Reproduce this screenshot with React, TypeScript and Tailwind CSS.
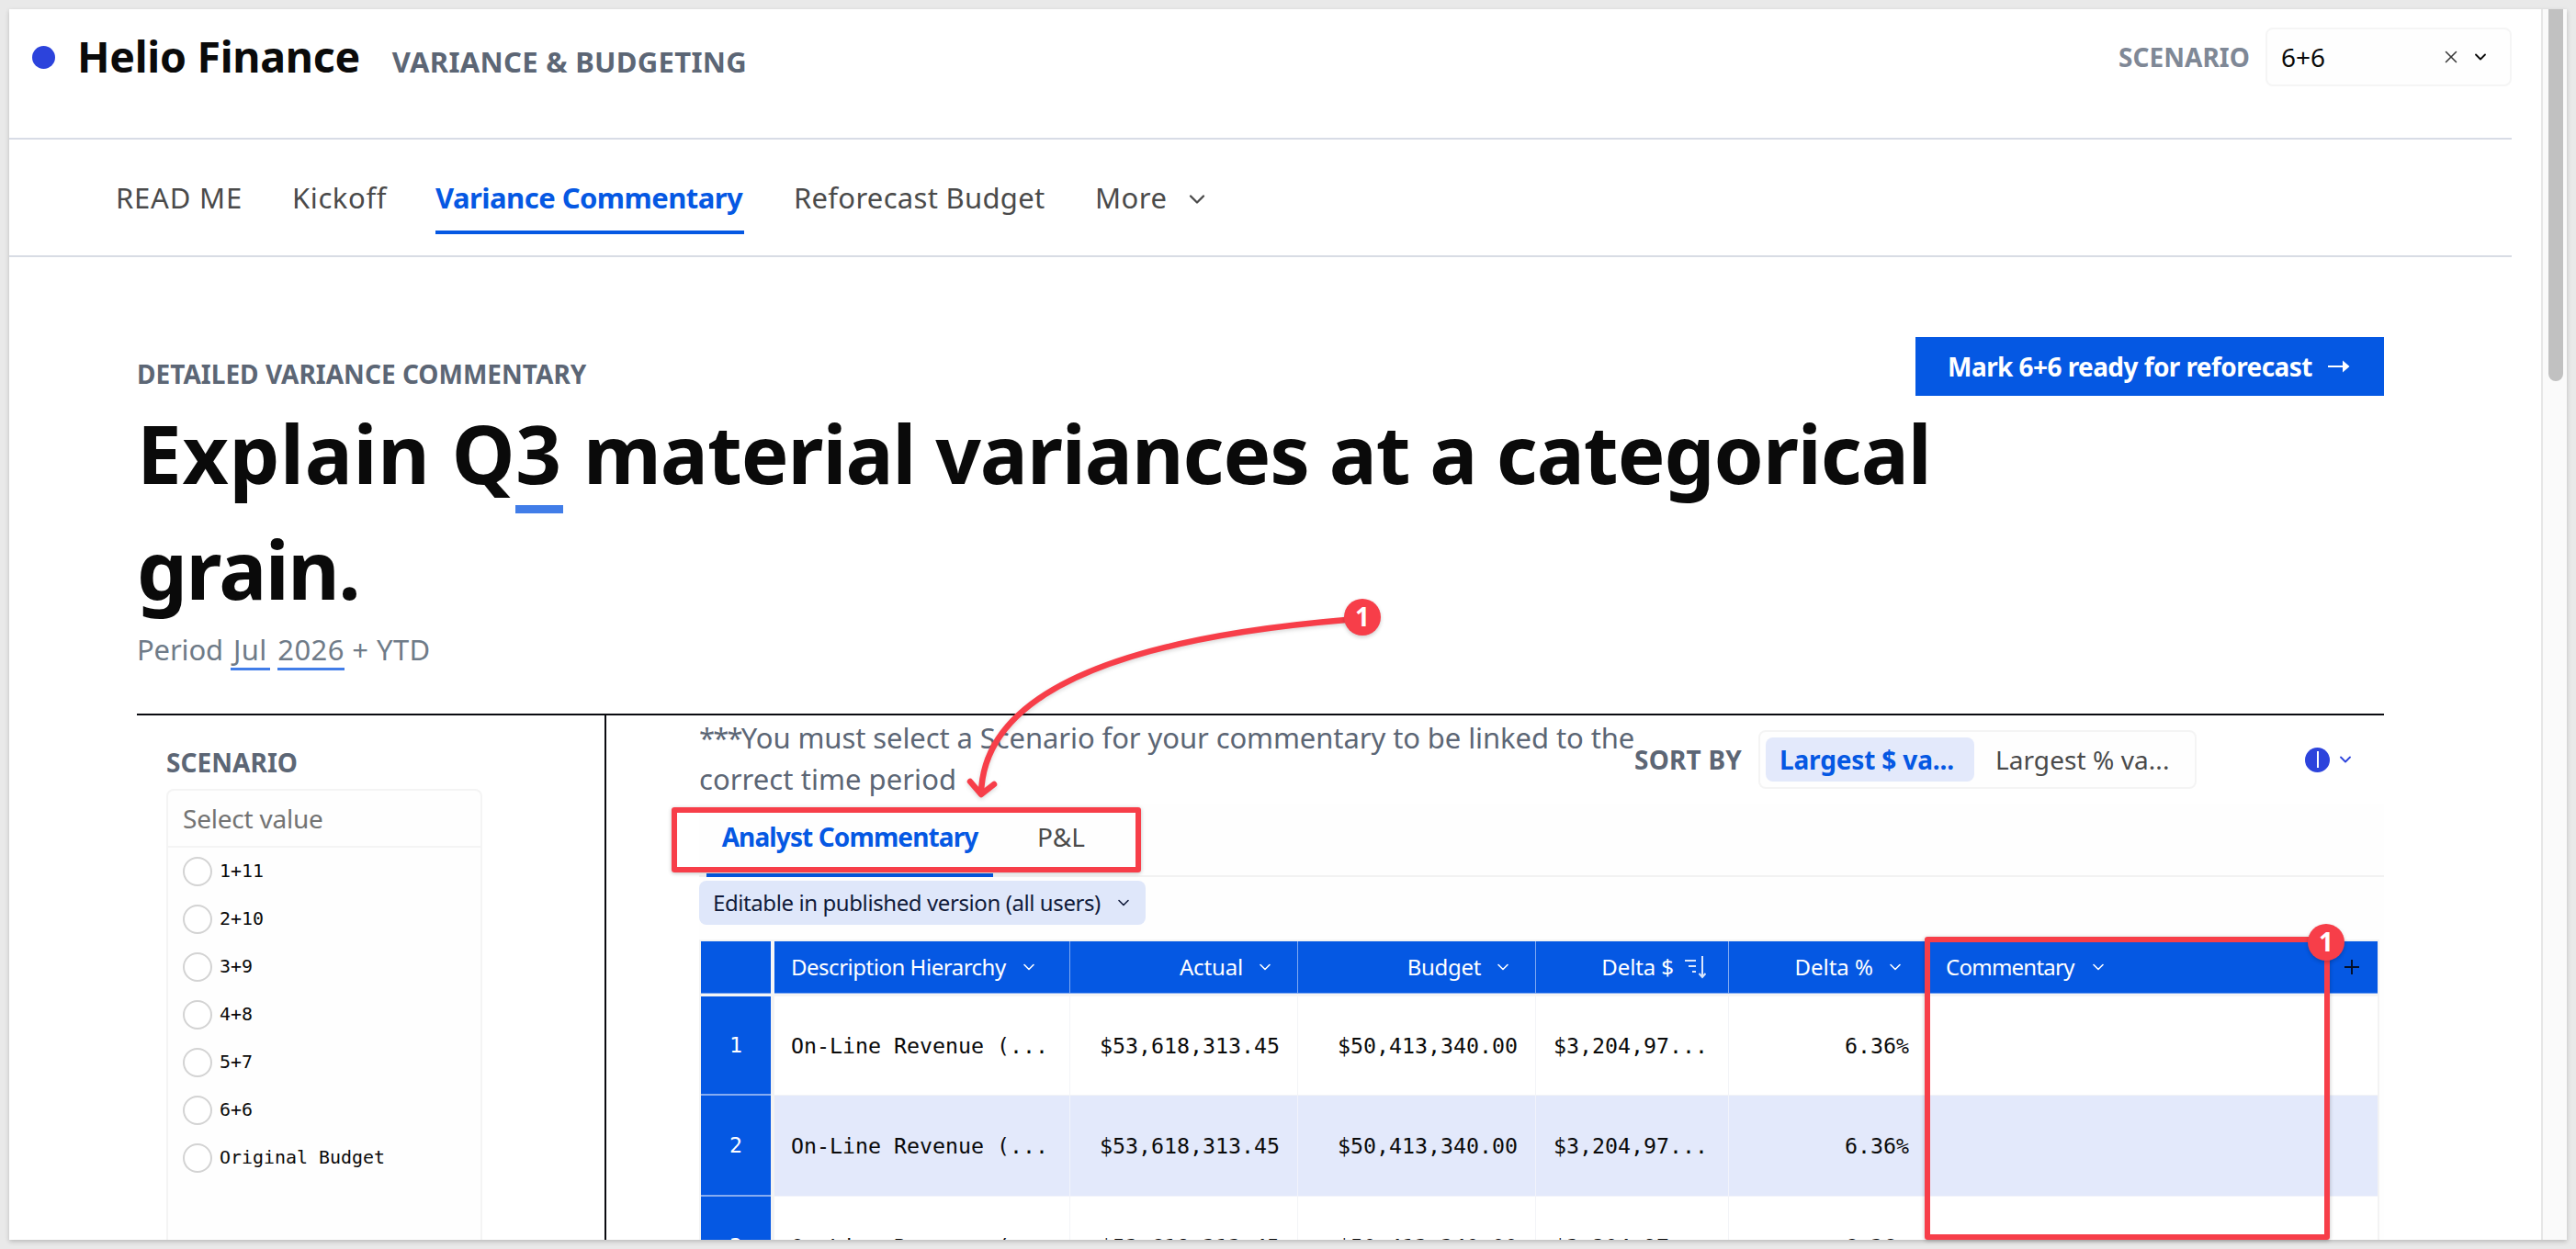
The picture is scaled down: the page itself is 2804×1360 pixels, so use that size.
import React from "react";
import { ChevronDown, X } from "lucide-react";

const scenarios = ["1+11", "2+10", "3+9", "4+8", "5+7", "6+6", "Original Budget"];

interface ROW_TYPE {
  id: number;
  description: string;
  actual: string;
  budget: string;
  delta: string;
  percent: string;
}

const tableRows: ROW_TYPE[] = [1, 2, 3].map((id) => ({
  id,
  description: "On-Line Revenue (...",
  actual: "$53,618,313.45",
  budget: "$50,413,340.00",
  delta: "$3,204,97...",
  percent: "6.36%",
}));

const columns =
  "grid grid-cols-[76px_4px_322px_248px_259px_210px_217px_435px_54px]";

const App = () => {
  return (
    <div className="relative w-[2804px] h-[1360px] overflow-hidden bg-[#e9e9e9] p-[10px] font-['Noto_Sans',sans-serif] text-[#0a0a0a]">
      <div className="flex w-[2784px] h-[1340px] overflow-hidden bg-white shadow-[0_2px_5px_rgba(0,0,0,0.2)]">
        <div className="w-[2756px] h-full overflow-hidden">
          <Header />
          <NavBar />
          <main className="ml-[139px] w-[2446px]">
            <TitleSection />
            <div className="flex h-[573px] border-t-2 border-[#0a0b10]">
              <ScenarioFilter />
              <div className="flex-1 pl-[101px]">
                <SortBar />
                <CommentaryPanel />
              </div>
            </div>
          </main>
        </div>
        {/* scrollbar */}
        <div className="w-[28px] h-full border-l-2 border-[#e6e6e6] bg-[#fafafa] pl-[6px]">
          <div className="w-[16px] h-[405px] rounded-b-full bg-[#c1c1c1]" />
        </div>
      </div>
      <Callouts />
    </div>
  );
};

export default App;

const Header = () => {
  return (
    <header className="w-[2724px] h-[142px] border-b-2 border-[#d8dce6]">
      <div className="flex items-center h-[104px] pl-[25px]">
        <div className="w-[25px] h-[25px] rounded-full bg-[#2c43dc]" />
        <div className="flex items-baseline mb-[1px] ml-[24px] leading-none">
          <h1 className="text-[46.5px] font-bold tracking-[-0.3px]">
            Helio Finance
          </h1>
          <span className="ml-[35px] text-[31px] font-bold tracking-[0.3px] text-[#5c6675]">
            VARIANCE &amp; BUDGETING
          </span>
        </div>
        <span className="ml-auto mr-[17px] text-[28px] leading-none font-bold tracking-[0.05px] text-[#7f8896]">
          SCENARIO
        </span>
        <div className="flex items-center w-[268px] h-[64px] pl-[15px] pr-[22px] rounded-lg border-2 border-[#f5f5f5] bg-[#fefefe]">
          <span className="text-[28px] leading-none">6+6</span>
          <X size={22} strokeWidth={1.7} className="ml-auto text-[#3a3a3a]" />
          <ChevronDown size={20} strokeWidth={2.2} className="ml-[11px]" />
        </div>
      </div>
    </header>
  );
};

const NavBar = () => {
  return (
    <nav className="flex w-[2724px] h-[128px] pt-[27px] pl-[116px] border-b-2 border-[#d8dce4] text-[31px] leading-none text-[#4a4a4a] whitespace-nowrap">
      <div className="flex items-center w-[192px] h-[72px] tracking-[0.8px]">
        READ ME
      </div>
      <div className="flex items-center w-[156px] h-[72px] tracking-[0.6px]">
        Kickoff
      </div>
      <div className="flex items-center w-[336px] h-[76px] border-b-4 border-[#0558e3] font-bold tracking-[-0.54px] text-[#0558e3]">
        Variance Commentary
      </div>
      <div className="flex items-center w-[328px] h-[72px] ml-[54px] tracking-[0.3px]">
        Reforecast Budget
      </div>
      <div className="flex items-center h-[72px]">
        <span className="w-[97px] tracking-[0.48px]">More</span>
        <ChevronDown size={28} strokeWidth={2} className="mt-[3px]" />
      </div>
    </nav>
  );
};

const TitleSection = () => {
  return (
    <section className="flex h-[497px]">
      <div className="w-[1936px] shrink-0 pt-[113px] whitespace-nowrap">
        <p className="text-[28px] leading-none font-bold tracking-[0.02px] text-[#5c6675]">
          DETAILED VARIANCE COMMENTARY
        </p>
        <h2 className="mt-[9px] text-[87px] leading-[126px] font-bold tracking-[-1px]">
          <span className="tracking-[0.7px]">Explain Q</span>
          <span className="inline-block w-[52px] pb-[13px] -mb-[22px] border-b-[9px] border-[#417de8] leading-none">
            3
          </span>{" "}
          material variances at a categorical
          <br />
          <span className="tracking-[-1.5px]">grain.</span>
        </h2>
        <p className="h-[31px] mt-[10px] text-[31px] leading-none tracking-[0.4px] text-[#6f7b88]">
          <span className="tracking-[-0.15px]">Period </span>
          <span className="inline-block w-[43px] pl-[3px] pb-[4px] border-b-[3px] border-[#417de8]">
            Jul
          </span>{" "}
          <span className="inline-block pb-[4px] border-b-[3px] border-[#417de8]">
            2026
          </span>{" "}
          + YTD
        </p>
      </div>
      <button className="flex items-center shrink-0 w-[510px] h-[64px] mt-[87px] pl-[35px] bg-[#0558e3] text-[28px] leading-none font-bold tracking-[-0.57px] text-white whitespace-nowrap">
        <span className="mb-[1px] w-[397px]">Mark 6+6 ready for reforecast</span>
        <svg width="24" height="14" viewBox="0 0 24 14" className="ml-[17px]">
          <path d="M0 6h16V0.5L23.5 7L16 13.5V8H0z" fill="currentColor" />
        </svg>
      </button>
    </section>
  );
};

const ScenarioFilter = () => {
  return (
    <aside className="w-[511px] pt-[37px] pl-[32px] border-r-2 border-[#0a0b10]">
      <p className="text-[28px] leading-none font-bold tracking-[0.05px] text-[#5c6675]">
        SCENARIO
      </p>
      <div className="w-[344px] h-[520px] mt-[15px] rounded-t-lg border-2 border-[#f4f4f4] bg-[#fefefe]">
        <div className="flex items-center h-[62px] pl-[16px] border-b-2 border-[#f4f4f4] text-[28px] tracking-[-0.22px] text-[#737373]">
          Select value
        </div>
        {scenarios.map((i) => (
          <label
            key={i}
            className="flex items-center gap-2 h-[52px] pl-[16px] font-['DejaVu_Sans_Mono',monospace] text-[19.93px]"
          >
            <span className="w-8 h-8 rounded-full border-2 border-[#d3d3d3] bg-white" />
            {i}
          </label>
        ))}
      </div>
    </aside>
  );
};

const SortBar = () => {
  return (
    <div className="flex h-[96px] whitespace-nowrap">
      <p className="w-[1018px] pt-[2px] text-[31px] leading-[45px] tracking-[-0.09px] text-[#5c6675]">
        <span className="tracking-[-1.8px]">***</span>
        You must select a Scenario for your commentary to be linked to the
        <br />
        <span className="tracking-[0.05px]">correct time period</span>
      </p>
      <div className="flex items-center flex-1 h-[64px] mt-[16px] text-[28px] leading-none">
        <span className="w-[135px] mb-[1px] font-bold tracking-[0.2px] text-[#5c6675]">
          SORT BY
        </span>
        <div className="flex w-[477px] h-[64px] p-[6px] rounded-lg border-2 border-[#f4f4f4] bg-[#fefefe]">
          <div className="flex items-center w-[227px] h-[48px] pl-[15px] pb-[1px] rounded-lg bg-[#e3e9fb] font-bold tracking-[-0.15px] text-[#0558e3]">
            Largest $ va...
          </div>
          <div className="flex items-center h-[48px] pl-[23px] pb-[1px] tracking-[0.07px] text-[#4a4a4a]">
            Largest % va...
          </div>
        </div>
        <div className="flex items-center ml-[118px] text-[#2c43dc]">
          <div className="flex items-center justify-center w-[27px] h-[27px] rounded-full bg-[#2c43dc]">
            <div className="w-[2px] h-[18px] bg-white" />
          </div>
          <ChevronDown size={20} strokeWidth={2.2} className="ml-[7px]" />
        </div>
      </div>
    </div>
  );
};

const CommentaryPanel = () => {
  return (
    <div className="h-[475px] bg-[#fefefe] whitespace-nowrap">
      {/* tabs */}
      <div className="flex h-[80px] pl-[8px] border-b-2 border-[#f2f2f2] text-[28px] leading-none">
        <div className="flex items-center justify-center w-[312px] h-[80px] pb-[4px] border-b-4 border-[#0558e3] font-bold tracking-[-0.88px] text-[#0558e3]">
          Analyst Commentary
        </div>
        <div className="flex items-center h-[72px] pl-[48px] text-[#4a4a4a]">
          P&amp;L
        </div>
      </div>
      <div className="flex items-center w-[486px] h-[48px] mt-[4px] pl-[15px] pr-[14px] rounded-lg bg-[#dfe7fa] text-[24px] leading-none tracking-[-0.41px] text-[#111b3a]">
        <span className="mb-[1px]">
          Editable in published version (all users)
        </span>
        <ChevronDown size={20} strokeWidth={1.9} className="ml-auto" />
      </div>
      {/* table */}
      <div className="w-[1829px] h-[327px] mt-[16px] overflow-hidden border-2 border-b-0 border-[#f3f3f3]">
        <div
          className={`${columns} h-[57px] text-[24px] leading-none text-white`}
        >
          <div className="bg-[#0558e3] border-b border-[#6c9cef]" />
          <div className="bg-[#f6f6f6]" />
          <div className="flex items-center pl-[18px] bg-[#0558e3] border-b border-r border-[#7fa9f1] tracking-[-0.48px]">
            Description Hierarchy
            <ChevronDown size={20} strokeWidth={1.9} className="ml-[15px]" />
          </div>
          <HeaderCell title="Actual" className="tracking-[-0.16px]" />
          <HeaderCell title="Budget" className="tracking-[-0.3px]" />
          <HeaderCell title="Delta $" className="tracking-[-0.1px]" sorted />
          <HeaderCell title="Delta %" />
          <div className="flex items-center pl-[19px] bg-[#0558e3] border-b border-[#6c9cef] tracking-[-0.75px]">
            Commentary
            <ChevronDown size={20} strokeWidth={1.9} className="ml-[16px]" />
          </div>
          <div className="flex items-center pl-[17px] bg-[#0558e3] border-b border-[#6c9cef]">
            <svg width="18" height="18" viewBox="0 0 18 18">
              <path d="M9 1v16M1 9h16" stroke="#04102b" strokeWidth="2" />
            </svg>
          </div>
        </div>
        <div className="h-[3px] bg-[#f5f5f5]" />
        {tableRows.map((row) => (
          <TableRow key={row.id} row={row} />
        ))}
      </div>
    </div>
  );
};

interface HEADERCELL_TYPE {
  title: string;
  className?: string;
  sorted?: boolean;
}

const HeaderCell: React.FC<HEADERCELL_TYPE> = ({
  title,
  className = "",
  sorted,
}) => {
  return (
    <div
      className={`flex items-center justify-end pr-[25px] bg-[#0558e3] border-b border-r border-[#7fa9f1] ${className}`}
    >
      {title}
      {sorted ? (
        <svg
          width="24"
          height="26"
          viewBox="0 0 24 26"
          fill="none"
          stroke="#dbe6fb"
          strokeWidth="2"
          className="ml-[11px] -mr-[1px]"
        >
          <path d="M1 6h12M5 12h8M9 18h4M20 1v22M16.5 20l3.5 4l3.5-4" />
        </svg>
      ) : (
        <ChevronDown size={20} strokeWidth={1.9} className="ml-[14px]" />
      )}
    </div>
  );
};

const TableRow: React.FC<{ row: ROW_TYPE }> = ({ row }) => {
  const cell = `flex items-center border-b border-r ${
    row.id % 2 == 0
      ? "bg-[#e3e9fb] border-[#f1f3fb]"
      : "bg-white border-[#f3f4f7]"
  }`;
  return (
    <div
      className={`${columns} ${
        row.id == 1 ? "h-[108px]" : "h-[110px]"
      } font-['DejaVu_Sans_Mono',monospace] text-[23.25px] leading-none`}
    >
      <div className="flex items-center justify-center bg-[#0558e3] border-b-2 border-[#86acf1] text-white">
        {row.id}
      </div>
      <div className="bg-[#f3f3f3]" />
      <div className={`${cell} pl-[18px]`}>{row.description}</div>
      <div className={`${cell} justify-end pr-[19px]`}>{row.actual}</div>
      <div className={`${cell} justify-end pr-[19px]`}>{row.budget}</div>
      <div className={`${cell} pl-[19px]`}>{row.delta}</div>
      <div className={`${cell} justify-end pr-[20px]`}>{row.percent}</div>
      <div className={`${cell} border-r-0`} />
      <div className={`${cell} border-r-0`} />
    </div>
  );
};

/* red annotations drawn over the page */
const Callouts = () => {
  return (
    <>
      <div className="absolute left-[731px] top-[879px] w-[511px] h-[71px] rounded-[3px] border-[6px] border-[#f73e49] shadow-[0_1px_4px_rgba(0,0,0,0.25)]" />
      <div className="absolute left-[2095px] top-[1020px] w-[441px] h-[330px] rounded-[3px] border-[6px] border-[#f73e49] shadow-[0_1px_4px_rgba(0,0,0,0.25)]" />
      <svg
        width="420"
        height="220"
        viewBox="1050 660 420 220"
        fill="none"
        stroke="#f73e49"
        strokeWidth="6.5"
        strokeLinecap="round"
        strokeLinejoin="round"
        className="absolute left-[1050px] top-[660px] drop-shadow-[0_2px_2px_rgba(0,0,0,0.15)]"
      >
        <path d="M1465 675Q1072 708 1068 864" />
        <path d="M1056 851L1068 865L1082 854" />
      </svg>
      <Badge className="left-[1463px] top-[652px]" />
      <Badge className="left-[2512px] top-[1006px]" />
    </>
  );
};

const Badge: React.FC<{ className: string }> = ({ className }) => {
  return (
    <div
      className={`absolute flex items-center justify-center w-[40px] h-[40px] rounded-full bg-[#f73e49] pb-[2px] text-[28px] leading-none font-bold text-white shadow-[0_2px_4px_rgba(0,0,0,0.2)] ${className}`}
    >
      1
    </div>
  );
};
